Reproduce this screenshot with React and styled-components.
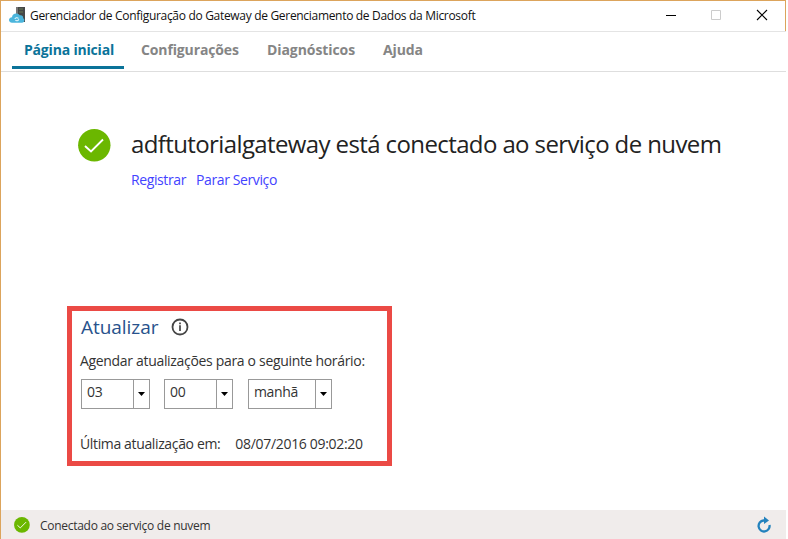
import React from "react";
import styled, { createGlobalStyle } from "styled-components";

const GlobalStyle = createGlobalStyle`
  * { box-sizing: border-box; }
  body { margin: 0; background: #fff; font-family: "Open Sans", "Noto Sans", sans-serif; }
`;

const Window = styled.div`
  width: 786px;
  height: 539px;
  display: flex;
  flex-direction: column;
  background: #fff;
  border-left: 1px solid #dca45c;
  overflow: hidden;
  white-space: nowrap;
`;

const TitleBar = styled.header`
  height: 31px;
  flex: none;
  display: flex;
  align-items: center;
  padding-left: 8px;
  border-top: 1px solid #dca45c;
  border-right: 1px solid #dca45c;
`;

const AppIcon = styled.svg`
  width: 16px;
  height: 16px;
  margin-right: 5px;
  margin-top: -2px;
  flex: none;
`;

const Title = styled.span`
  font-size: 12px;
  line-height: 16px;
  letter-spacing: -0.31px;
  color: #111;
`;

const WindowControls = styled.svg`
  width: 103px;
  height: 12px;
  margin-left: auto;
  margin-right: 17px;
  margin-top: -2px;
`;

const Tabs = styled.nav`
  height: 41px;
  flex: none;
  display: flex;
  padding-left: 11px;
  border-top: 1px solid #e4e4e4;
  border-bottom: 1px solid #dedede;
`;

const Tab = styled.div`
  width: ${(p) => p.$width}px;
  height: 37px;
  margin-right: ${(p) => p.$gap || 0}px;
  padding-left: ${(p) => (p.$active ? 12 : 0)}px;
  font-size: 14px;
  font-weight: 700;
  line-height: 36px;
  letter-spacing: ${(p) => p.$spacing}px;
  color: ${(p) => (p.$active ? "#0b7399" : "#858585")};
  border-bottom: ${(p) => (p.$active ? "3px solid #0b7399" : "none")};
`;

const Main = styled.main`
  flex: 1;
  display: flex;
  flex-direction: column;
  align-items: flex-start;
`;

const Status = styled.section`
  display: flex;
  gap: 20px;
  margin: 54px 0 0 77px;
`;

const StatusIcon = styled.svg`
  width: ${(p) => p.$size}px;
  height: ${(p) => p.$size}px;
  margin-top: ${(p) => p.$offset || 0}px;
  flex: none;
`;

const Heading = styled.h1`
  margin: 0;
  font-size: 24px;
  font-weight: 400;
  line-height: 36px;
  letter-spacing: -0.61px;
  color: #222;
`;

const Links = styled.div`
  display: flex;
  gap: 10px;
  margin-top: 8px;
`;

const Link = styled.a`
  font-size: 14px;
  line-height: 20px;
  letter-spacing: -0.39px;
  color: #4343ff;
`;

const UpdatePanel = styled.section`
  width: 325px;
  height: 160px;
  margin: 116px 0 0 66px;
  padding: 2px 0 0 8px;
  border: 5px solid #eb4a45;
  color: #333;
`;

const PanelHeader = styled.div`
  display: flex;
  align-items: center;
  height: 28px;
  gap: 13px;
  margin: 0 0 10px 1px;
`;

const PanelTitle = styled.h2`
  margin: 0;
  font-size: 19px;
  font-weight: 400;
  line-height: 28px;
  letter-spacing: -0.05px;
  color: #28528c;
`;

const InfoIcon = styled.svg`
  width: 18px;
  height: 18px;
`;

const Text = styled.span`
  display: block;
  font-size: 14px;
  line-height: 20px;
  letter-spacing: ${(p) => p.$spacing}px;
`;

const Schedule = styled.div`
  display: flex;
  gap: 14px;
  margin: 8px 0 0 1px;
`;

const Select = styled.div`
  width: ${(p) => p.$width}px;
  height: 30px;
  display: flex;
  border: 1px solid #999;

  &:last-child {
    margin-left: 1px;
  }
`;

const SelectValue = styled.div`
  flex: 1;
  padding-left: 5px;
  font-size: 14px;
  line-height: 24px;
  letter-spacing: -0.35px;
`;

const SelectArrow = styled.div`
  width: 16px;
  display: flex;
  align-items: center;
  justify-content: center;
  border-left: 1px solid #999;
`;

const LastUpdate = styled.div`
  display: flex;
  gap: 15px;
  margin-top: 25px;
`;

const Footer = styled.footer`
  height: 29px;
  flex: none;
  display: flex;
  align-items: center;
  padding: 0 14px 0 13px;
  background: #f0eceb;
`;

const FooterText = styled.span`
  margin: 2px 0 0 10px;
  font-size: 12px;
  line-height: 18px;
  letter-spacing: -0.28px;
  color: #333;
`;

const RefreshIcon = styled.svg`
  width: 16px;
  height: 18px;
  margin-left: auto;
`;

function Check({ size, offset }) {
  return (
    <StatusIcon $size={size} $offset={offset} viewBox="0 0 33 33">
      <circle cx="16.3" cy="16.3" r="16.2" fill="#6bb700" />
      <path d="M7 17 L13 22.5 L25 10.5" fill="none" stroke="#fff" strokeWidth="1.9" />
    </StatusIcon>
  );
}

function Dropdown({ width, value }) {
  return (
    <Select $width={width}>
      <SelectValue>{value}</SelectValue>
      <SelectArrow>
        <svg width="7" height="4" viewBox="0 0 7 4"><path d="M0 0H7L3.5 4Z" fill="#000" /></svg>
      </SelectArrow>
    </Select>
  );
}

export default function App() {
  return (
    <>
      <GlobalStyle />
      <Window>
        <TitleBar>
          <AppIcon viewBox="0 0 16 16">
            <path d="M7 0H16V15H7Z" fill="#454748" />
            <path d="M7 0H9V15H7Z" fill="#777" />
            <path d="M10 2H14M10 5H14" stroke="#697b52" />
            <path d="M3 15.7C-1 15.7-1 10.5 3 10.3C3 5.8 9 5.3 10.8 8.3C13.5 7.7 14.6 9.8 14 11.3C16.3 12 15.5 15.7 13 15.7Z" fill="#4bb5dc" />
            <path d="M6 12C6 10.7 8.3 10.2 9.5 11.3M9.8 12.3C9.6 13.8 7.5 14.3 6.4 13.2" fill="none" stroke="#e8f8fc" strokeWidth="1.1" />
          </AppIcon>
          <Title>Gerenciador de Configuração do Gateway de Gerenciamento de Dados da Microsoft</Title>
          <WindowControls viewBox="0 0 103 12">
            <path d="M1 6.5H11" stroke="#000" />
            <path d="M46.5 1.5H55.5V10.5H46.5Z" fill="none" stroke="#ccc" />
            <path d="M92 1L102 11M102 1L92 11" stroke="#000" strokeWidth="1.1" />
          </WindowControls>
        </TitleBar>
        <Tabs>
          <Tab $active $width={112} $gap={17} $spacing={-0.19}>Página inicial</Tab>
          <Tab $width={98} $gap={28} $spacing={-0.13}>Configurações</Tab>
          <Tab $width={88} $gap={28} $spacing={-0.08}>Diagnósticos</Tab>
          <Tab $width={40} $spacing={-0.1}>Ajuda</Tab>
        </Tabs>
        <Main>
          <Status>
            <Check size={33} offset={3} />
            <div>
              <Heading>adftutorialgateway está conectado ao serviço de nuvem</Heading>
              <Links>
                <Link>Registrar</Link>
                <Link>Parar Serviço</Link>
              </Links>
            </div>
          </Status>
          <UpdatePanel>
            <PanelHeader>
              <PanelTitle>Atualizar</PanelTitle>
              <InfoIcon viewBox="0 0 18 18">
                <circle cx="9" cy="9" r="7.5" fill="none" stroke="#444" strokeWidth="1.8" />
                <path d="M9 4.5V6.3M9 7.3V13" stroke="#444" strokeWidth="1.7" />
              </InfoIcon>
            </PanelHeader>
            <Text $spacing={-0.32}>Agendar atualizações para o seguinte horário:</Text>
            <Schedule>
              <Dropdown width={69} value="03" />
              <Dropdown width={69} value="00" />
              <Dropdown width={84} value="manhã" />
            </Schedule>
            <LastUpdate>
              <Text $spacing={-0.36}>Última atualização em:</Text>
              <Text $spacing={-0.31}>08/07/2016 09:02:20</Text>
            </LastUpdate>
          </UpdatePanel>
        </Main>
        <Footer>
          <Check size={16} />
          <FooterText>Conectado ao serviço de nuvem</FooterText>
          <RefreshIcon viewBox="0 0 16 18">
            <path d="M9 4.5H7.5A5.5 5.5 0 1 0 13.5 9" fill="none" stroke="#2382bd" strokeWidth="2.3" />
            <path d="M8 0.5L13 4.5L8 8Z" fill="#2382bd" />
          </RefreshIcon>
        </Footer>
      </Window>
    </>
  );
}
